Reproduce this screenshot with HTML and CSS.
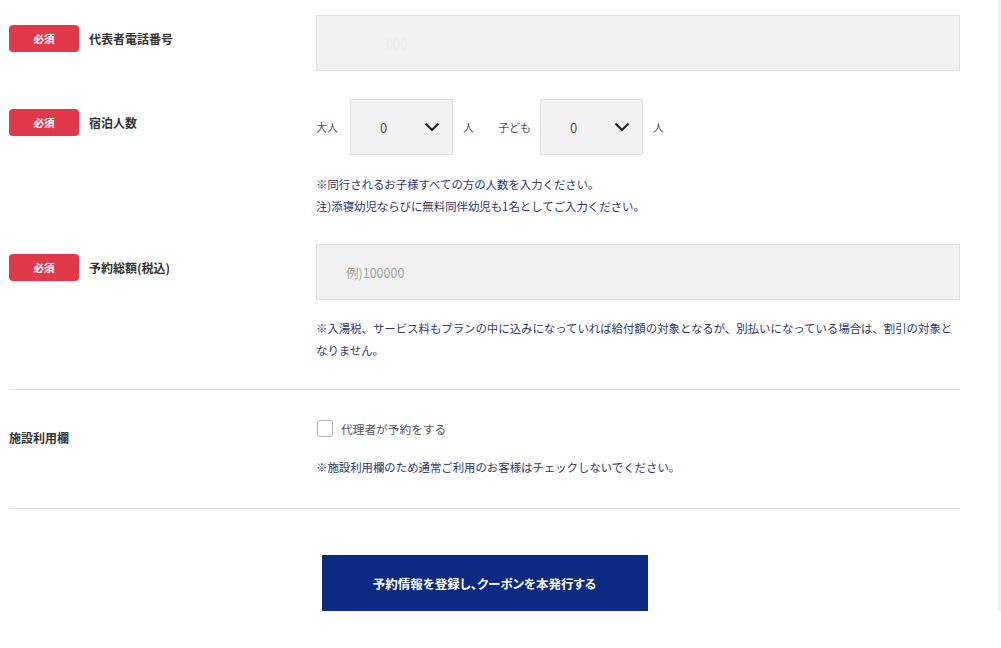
FILE: index.html
```html
<!DOCTYPE html>
<html lang="ja">
<head>
  <meta charset="UTF-8">
  <title>予約情報の登録</title>
  <meta name="viewport" content="width=device-width, initial-scale=1">
  <link rel="stylesheet" href="styles.css">
</head>
<body>
  <form class="form">
    <div class="row">
      <div class="row-label">
        <span class="badge">必須</span>
        <span class="label-text">代表者電話番号</span>
      </div>
      <div class="row-field">
        <input type="tel" class="text-input phone" placeholder="000">
      </div>
    </div>

    <div class="row people-row">
      <div class="row-label">
        <span class="badge">必須</span>
        <span class="label-text">宿泊人数</span>
      </div>
      <div class="row-field">
        <div class="people">
          <span class="unit adult">大人</span>
          <div class="select">
            <span class="select-value">0</span>
            <svg class="chevron" width="16" height="10" viewBox="0 0 16 10"><path d="M1.5 1.5 L8 8 L14.5 1.5" fill="none" stroke="#222" stroke-width="2.2"/></svg>
          </div>
          <span class="unit count">人</span>
          <span class="unit child">子ども</span>
          <div class="select">
            <span class="select-value">0</span>
            <svg class="chevron" width="16" height="10" viewBox="0 0 16 10"><path d="M1.5 1.5 L8 8 L14.5 1.5" fill="none" stroke="#222" stroke-width="2.2"/></svg>
          </div>
          <span class="unit count">人</span>
        </div>
        <p class="note">※同行されるお子様すべての方の人数を入力ください。<br>注)添寝幼児ならびに無料同伴幼児も1名としてご入力ください。</p>
      </div>
    </div>

    <div class="row">
      <div class="row-label">
        <span class="badge">必須</span>
        <span class="label-text">予約総額(税込)</span>
      </div>
      <div class="row-field">
        <input type="text" class="text-input" placeholder="例)100000">
        <p class="note">※入湯税、サービス料もプランの中に込みになっていれば給付額の対象となるが、別払いになっている場合は、割引の対象となりません。</p>
      </div>
    </div>

    <div class="row facility">
      <div class="row-label">
        <span class="label-text">施設利用欄</span>
      </div>
      <div class="row-field">
        <label class="check">
          <input type="checkbox">
          <span class="box"></span>
          代理者が予約をする
        </label>
        <p class="note">※施設利用欄のため通常ご利用のお客様はチェックしないでください。</p>
      </div>
    </div>

    <div class="actions">
      <button type="submit">予約情報を登録し、クーポンを本発行する</button>
    </div>
  </form>
</body>
</html>
```

FILE: styles.css
```css
body {
  margin: 0;
  background: white;
  border-right: 3px solid #f0f0f0;
  font-family: "Noto Sans CJK JP", "Noto Sans", sans-serif;
  color: #333;
}

.form {
  width: 951px;
  margin-left: 9px;
  padding-top: 15px;
}

.row {
  display: grid;
  grid-template-columns: 307px 644px;
  padding-bottom: 28px;
}

.people-row {
  padding-bottom: 27px;
}

.row-label {
  display: flex;
  align-items: center;
  padding-top: 10px;
  align-self: start;
}

.badge {
  width: 70px;
  height: 27px;
  line-height: 27px;
  background: #e0394a;
  color: white;
  border-radius: 4px;
  text-align: center;
  font-size: 10.5px;
  font-weight: bold;
  margin-right: 10px;
}

.label-text {
  font-size: 12px;
  font-weight: bold;
  line-height: 22px;
  color: #333;
}

.text-input {
  display: block;
  box-sizing: border-box;
  width: 644px;
  height: 56px;
  background: #f2f2f2;
  border: 1px solid #e0e0e0;
  padding: 0 29px;
  font-family: inherit;
  font-size: 12.5px;
  color: #333;
  outline: none;
}

.text-input::placeholder {
  color: #a3a3a3;
}

.phone::placeholder {
  color: #ebebeb;
}

.phone {
  padding-left: 69px;
}

.people {
  display: flex;
  align-items: center;
  font-size: 11px;
  color: #555;
}

.unit.adult {
  margin-right: 12px;
}

.unit.count {
  margin-left: 10px;
}

.unit.child {
  margin: 0 9px 0 24px;
}

.select {
  box-sizing: border-box;
  width: 103px;
  height: 56px;
  background: #f2f2f2;
  border: 1px solid #e0e0e0;
  display: flex;
  align-items: center;
  justify-content: space-between;
  padding: 0 12px 0 29px;
}

.select-value {
  font-size: 13px;
  color: #555;
}

.note {
  margin: 17px 0 0;
  font-size: 11.4px;
  line-height: 22px;
  color: #2d3a6e;
}

.people-row .note {
  margin-top: 18px;
}

.facility {
  border-top: 1px solid #e0e0e0;
  border-bottom: 1px solid #e0e0e0;
  padding-top: 27px;
  padding-bottom: 30px;
}

.check {
  display: flex;
  align-items: center;
  height: 22px;
  font-size: 11.7px;
  color: #555;
}

.check input {
  display: none;
}

.check .box {
  box-sizing: border-box;
  width: 16px;
  height: 17px;
  border: 1px solid #b5b5b5;
  border-radius: 3px;
  margin: 0 8px 0 1px;
  background: white;
}

.actions {
  display: flex;
  justify-content: center;
  padding-top: 46px;
}

button {
  width: 326px;
  height: 56px;
  border: none;
  background: #0b2a84;
  color: white;
  font-family: inherit;
  font-size: 12.5px;
  font-weight: bold;
  font-feature-settings: "palt";
  cursor: pointer;
}
```
